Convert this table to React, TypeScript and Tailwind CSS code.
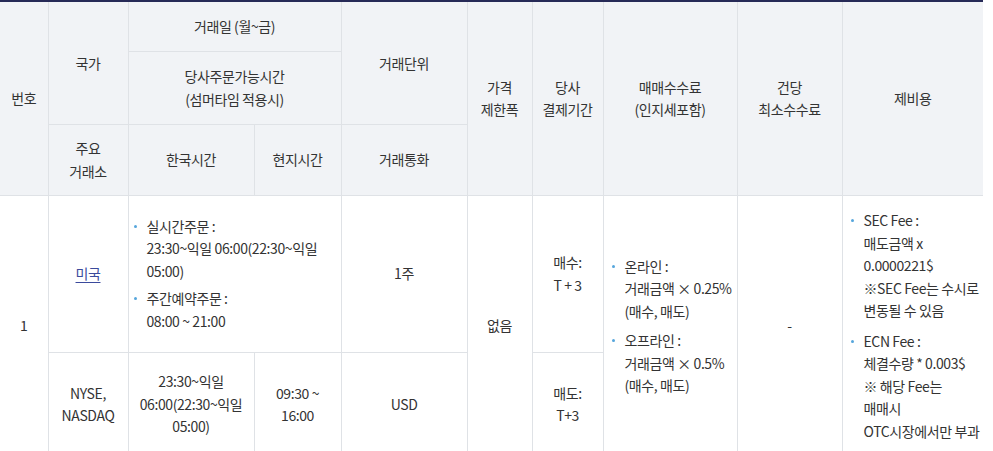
import React from "react";

const th =
  "border border-[#dfe2e6] bg-[#f1f3f6] px-2 py-0 text-center align-middle font-normal";
const td = "border border-[#dfe2e6] px-2 py-0 text-center align-middle";

function Bullets({ items, gap }: { items: React.ReactNode[]; gap: string }) {
  return (
    <ul className={`flex flex-col text-left ${gap}`}>
      {items.map((it, i) => (
        <li key={i} className="flex gap-[10px]">
          <span className="mt-[10px] h-[3px] w-[3px] shrink-0 rounded-full bg-[#56a6dc]" />
          <span className="whitespace-nowrap">{it}</span>
        </li>
      ))}
    </ul>
  );
}

export default function App() {
  return (
    <div className="bg-white font-['Noto_Sans_CJK_KR','Malgun_Gothic',sans-serif] text-[14px] leading-[22.5px] tracking-[-0.4px] text-[#333]">
      <table className="w-[983px] table-fixed border-collapse border-t-2 border-t-[#262a57]">
        <colgroup>
          <col className="w-[48px]" />
          <col className="w-[80px]" />
          <col className="w-[126px]" />
          <col className="w-[87px]" />
          <col className="w-[126px]" />
          <col className="w-[65px]" />
          <col className="w-[71px]" />
          <col className="w-[134px]" />
          <col className="w-[105px]" />
          <col className="w-[141px]" />
        </colgroup>
        <thead>
          <tr className="h-[50px]">
            <th rowSpan={3} className={`${th} border-l-0 px-0`}>
              번호
            </th>
            <th rowSpan={2} className={th}>
              국가
            </th>
            <th colSpan={2} className={th}>
              거래일 (월~금)
            </th>
            <th rowSpan={2} className={th}>
              거래단위
            </th>
            <th rowSpan={3} className={th}>
              가격
              <br />
              제한폭
            </th>
            <th rowSpan={3} className={th}>
              당사
              <br />
              결제기간
            </th>
            <th rowSpan={3} className={th}>
              매매수수료
              <br />
              (인지세포함)
            </th>
            <th rowSpan={3} className={th}>
              건당
              <br />
              최소수수료
            </th>
            <th rowSpan={3} className={`${th} border-r-0`}>
              제비용
            </th>
          </tr>
          <tr className="h-[73px]">
            <th colSpan={2} className={th}>
              당사주문가능시간
              <br />
              (섬머타임 적용시)
            </th>
          </tr>
          <tr className="h-[71px]">
            <th className={th}>
              주요
              <br />
              거래소
            </th>
            <th className={th}>한국시간</th>
            <th className={th}>현지시간</th>
            <th className={th}>거래통화</th>
          </tr>
        </thead>
        <tbody>
          <tr className="h-[157px]">
            <td rowSpan={2} className={`${td} border-l-0 px-0`}>
              1
            </td>
            <td className={td}>
              <a href="#" className="text-[#3b4a9c] underline underline-offset-[3px]">
                미국
              </a>
            </td>
            <td colSpan={2} className={`${td} pl-[5px] pr-1`}>
              <Bullets
                gap="gap-[5px]"
                items={[
                  <>
                    실시간주문 :
                    <br />
                    23:30~익일 06:00(22:30~익일
                    <br />
                    05:00)
                  </>,
                  <>
                    주간예약주문 :
                    <br />
                    08:00 ~ 21:00
                  </>,
                ]}
              />
            </td>
            <td className={td}>1주</td>
            <td rowSpan={2} className={td}>
              없음
            </td>
            <td className={td}>
              매수:
              <br />T + 3
            </td>
            <td rowSpan={2} className={`${td} pl-[8px] pr-0`}>
              <Bullets
                gap="gap-[7px]"
                items={[
                  <>
                    온라인 :
                    <br />
                    거래금액 × 0.25%
                    <br />
                    (매수, 매도)
                  </>,
                  <>
                    오프라인 :
                    <br />
                    거래금액 × 0.5%
                    <br />
                    (매수, 매도)
                  </>,
                ]}
              />
            </td>
            <td rowSpan={2} className={td}>
              -
            </td>
            <td rowSpan={2} className={`${td} border-r-0 pl-[8px] pr-0`}>
              <Bullets
                gap="gap-[8px]"
                items={[
                  <>
                    SEC Fee :
                    <br />
                    매도금액 x
                    <br />
                    0.0000221$
                    <br />
                    ※SEC Fee는 수시로
                    <br />
                    변동될 수 있음
                  </>,
                  <>
                    ECN Fee :
                    <br />
                    체결수량 * 0.003$
                    <br />※ 해당 Fee는
                    <br />
                    매매시
                    <br />
                    OTC시장에서만 부과
                  </>,
                ]}
              />
            </td>
          </tr>
          <tr className="h-[104px]">
            <td className={td}>
              NYSE,
              <br />
              NASDAQ
            </td>
            <td className={`${td} px-1`}>
              23:30~익일
              <br />
              06:00(22:30~익일
              <br />
              05:00)
            </td>
            <td className={td}>
              09:30 ~
              <br />
              16:00
            </td>
            <td className={td}>USD</td>
            <td className={td}>
              매도:
              <br />
              T+3
            </td>
          </tr>
        </tbody>
      </table>
    </div>
  );
}
